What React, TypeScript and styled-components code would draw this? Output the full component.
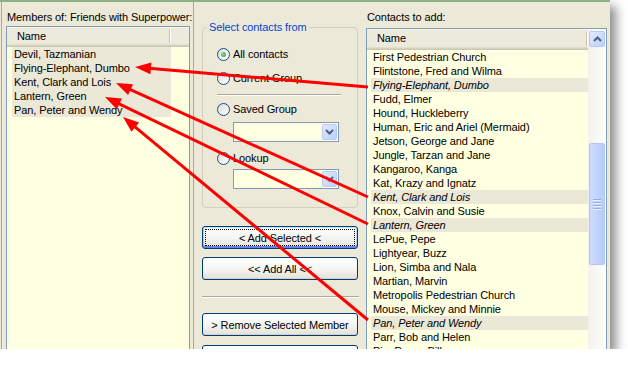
import styled, { createGlobalStyle } from "styled-components";

const GlobalStyle = createGlobalStyle`
  html, body {
    margin: 0;
    padding: 0;
    background: #fff;
  }
  body {
    font-family: "Liberation Sans", Arial, sans-serif;
    font-size: 11px;
    letter-spacing: -0.1px;
    color: #000;
  }
  * {
    box-sizing: border-box;
  }
`;

const Window = styled.div`
  position: relative;
  display: flex;
  width: 610px;
  height: 349px;
  padding-left: 1px;
  background: #ece9d8;
  border-top: 2px solid #8fae8a;
  box-shadow: 6px 6px 10px rgba(0, 0, 0, 0.45);
  overflow: hidden;
`;

const LeftPanel = styled.div`
  width: 193px;
  display: flex;
  flex-direction: column;
  padding-left: 4px;
  border-left: 1px solid #aca899;
  border-right: 1px solid #aca899;
`;

const MiddlePanel = styled.div`
  width: 171px;
  display: flex;
  flex-direction: column;
  padding-left: 8px;
`;

const RightPanel = styled.div`
  flex: 1;
  display: flex;
  flex-direction: column;
  min-height: 0;
  padding: 0 3px 0 1px;
`;

const PanelLabel = styled.div<{ $h: number; $pb: number }>`
  height: ${(p) => p.$h}px;
  flex-shrink: 0;
  display: flex;
  align-items: flex-end;
  padding: 0 0 ${(p) => p.$pb}px 1px;
  line-height: 13px;
  white-space: nowrap;
`;

const ListBox = styled.div<{ $w?: number }>`
  flex: 1;
  min-height: 0;
  display: flex;
  overflow: hidden;
  width: ${(p) => (p.$w ? `${p.$w}px` : "auto")};
  padding-top: 1px;
  background: #ffffe1;
  border: 1px solid #7f9db9;
  border-bottom: none;
`;

const ListColumn = styled.div`
  flex: 1;
  display: flex;
  flex-direction: column;
`;

const ListHeader = styled.div<{ $h: number }>`
  height: ${(p) => p.$h}px;
  flex-shrink: 0;
  display: flex;
  align-items: center;
  padding-bottom: 3px;
  background: #ebeadb;
  box-shadow: inset 0 -1px #cbc7b8, inset 0 -2px #d6d2c2, inset 0 -3px #e2decd;
`;

const HeaderCell = styled.div<{ $w: number }>`
  width: ${(p) => p.$w}px;
  padding-left: 10px;
  line-height: 13px;
`;

const HeaderDivider = styled.span`
  width: 2px;
  height: 14px;
  border-left: 1px solid #c7c5b2;
  border-right: 1px solid #fff;
`;

const Rows = styled.div<{ $pad: number; $w?: number }>`
  display: flex;
  flex-direction: column;
  padding-left: ${(p) => p.$pad}px;
  width: ${(p) => (p.$w ? `${p.$w}px` : "100%")};
`;

const Row = styled.div<{ $sel?: boolean; $italic?: boolean }>`
  height: 14px;
  flex-shrink: 0;
  line-height: 14px;
  padding-left: 2px;
  white-space: nowrap;
  background: ${(p) => (p.$sel ? "#ebe8d7" : "transparent")};
  font-style: ${(p) => (p.$italic ? "italic" : "normal")};
`;

const ScrollBar = styled.div`
  width: 18px;
  display: flex;
  flex-direction: column;
  padding: 1px 1px 0 1px;
  background: linear-gradient(90deg, #f3f1ec, #fefefb);
`;

const ScrollButton = styled.div`
  width: 16px;
  height: 16px;
  flex-shrink: 0;
  display: flex;
  align-items: center;
  justify-content: center;
  border: 1px solid #b7caf5;
  border-radius: 2px;
  background: linear-gradient(135deg, #e1eafe, #bcd0fb);
`;

const Thumb = styled.div`
  margin-top: 96px;
  width: 16px;
  height: 122px;
  flex-shrink: 0;
  display: flex;
  flex-direction: column;
  align-items: center;
  justify-content: center;
  gap: 1px;
  border: 1px solid #b1c6f5;
  border-radius: 2px;
  background: linear-gradient(90deg, #cddbfd, #b8ccf9);
`;

const GripLine = styled.span`
  width: 8px;
  height: 1px;
  background: #8cabf0;
  box-shadow: 0 1px #eef3fe;
  margin-bottom: 1px;
`;

const GroupBox = styled.fieldset`
  margin: 19px 0 0 0;
  width: 156px;
  padding: 12px 0 18px 4px;
  border: 1px solid #d0d0bf;
  border-radius: 4px;
  min-width: 0;
`;

const GroupLegend = styled.legend`
  padding: 0 2px;
  color: #0046d5;
  line-height: 13px;
`;

const GroupBody = styled.div`
  display: flex;
  flex-direction: column;
  padding-left: 10px;
`;

const RadioRow = styled.label<{ $mt: number }>`
  height: 16px;
  margin-top: ${(p) => p.$mt}px;
  display: flex;
  align-items: center;
  gap: 3px;
  white-space: nowrap;
`;

const Radio = styled.span<{ $checked?: boolean }>`
  width: 13px;
  height: 13px;
  border-radius: 50%;
  border: 1px solid #1c5180;
  display: flex;
  align-items: center;
  justify-content: center;
  background: linear-gradient(135deg, #dcdcd7, #fff);
  &::after {
    content: "";
    width: 5px;
    height: 5px;
    border-radius: 50%;
    background: ${(p) =>
      p.$checked ? "radial-gradient(circle at 35% 35%, #8fd48f, #3a9a3a)" : "transparent"};
  }
`;

const RuleLine = styled.div`
  margin-top: 8px;
  width: 124px;
  height: 2px;
  border-top: 1px solid #aca899;
  border-bottom: 1px solid #fff;
`;

const Combo = styled.div<{ $mt: number }>`
  margin: ${(p) => p.$mt}px 0 0 16px;
  width: 106px;
  height: 20px;
  display: flex;
  justify-content: flex-end;
  padding: 1px;
  border: 1px solid #7f9db9;
  background: #ffffe1;
`;

const ComboButton = styled.div`
  width: 15px;
  display: flex;
  align-items: center;
  justify-content: center;
  border: 1px solid #b7caf5;
  border-radius: 2px;
  background: linear-gradient(135deg, #e1eafe, #bcd0fb);
`;

const Button = styled.button<{ $mt: number; $focus?: boolean }>`
  margin-top: ${(p) => p.$mt}px;
  width: 156px;
  height: 23px;
  flex-shrink: 0;
  padding: 0;
  font-family: "Liberation Sans", Arial, sans-serif;
  font-size: 11px;
  letter-spacing: -0.1px;
  color: #000;
  border: 1px solid #003c74;
  border-radius: 3px;
  background: linear-gradient(180deg, #ffffff 0%, #f4f4f0 55%, #e3e1d7 100%);
  box-shadow: ${(p) =>
    p.$focus
      ? "inset 0 1px #cee7ff, inset 0 -2px #6982ee, inset 1px 0 #b7cdf7, inset -1px 0 #b7cdf7"
      : "inset 0 -1px #d6d0c5"};
  outline: ${(p) => (p.$focus ? "1px dotted #000" : "none")};
  outline-offset: -4px;
`;

const Etched = styled.div<{ $mt: number }>`
  margin-top: ${(p) => p.$mt}px;
  width: 157px;
  height: 2px;
  flex-shrink: 0;
  border-top: 1px solid #aca899;
  border-bottom: 1px solid #fff;
`;

const Overlay = styled.svg`
  position: absolute;
  top: -2px;
  left: 0;
  pointer-events: none;
`;

const members = [
  "Devil, Tazmanian",
  "Flying-Elephant, Dumbo",
  "Kent, Clark and Lois",
  "Lantern, Green",
  "Pan, Peter and Wendy",
];

const contacts: { name: string; picked?: boolean }[] = [
  { name: "First Pedestrian Church" },
  { name: "Flintstone, Fred and Wilma" },
  { name: "Flying-Elephant, Dumbo", picked: true },
  { name: "Fudd, Elmer" },
  { name: "Hound, Huckleberry" },
  { name: "Human, Eric and Ariel (Mermaid)" },
  { name: "Jetson, George and Jane" },
  { name: "Jungle, Tarzan and Jane" },
  { name: "Kangaroo, Kanga" },
  { name: "Kat, Krazy and Ignatz" },
  { name: "Kent, Clark and Lois", picked: true },
  { name: "Knox, Calvin and Susie" },
  { name: "Lantern, Green", picked: true },
  { name: "LePue, Pepe" },
  { name: "Lightyear, Buzz" },
  { name: "Lion, Simba and Nala" },
  { name: "Martian, Marvin" },
  { name: "Metropolis Pedestrian Church" },
  { name: "Mouse, Mickey and Minnie" },
  { name: "Pan, Peter and Wendy", picked: true },
  { name: "Parr, Bob and Helen" },
  { name: "Pie, Pecos Bill" },
];

// arrows go from the contact on the right to the new member on the left
const arrows = [
  { from: [368, 87], to: [135, 67] },
  { from: [368, 197], to: [116, 83] },
  { from: [368, 224], to: [105, 97] },
  { from: [368, 320], to: [123, 117] },
];

function arrowParts(from: number[], to: number[]) {
  const dx = from[0] - to[0];
  const dy = from[1] - to[1];
  const len = Math.hypot(dx, dy);
  const ux = dx / len;
  const uy = dy / len;
  const L = 16;
  const W = 6;
  const bx = to[0] + ux * L;
  const by = to[1] + uy * L;
  const head = `${to[0]},${to[1]} ${bx - uy * W},${by + ux * W} ${bx + uy * W},${by - ux * W}`;
  return { bx: to[0] + ux * (L - 2), by: to[1] + uy * (L - 2), head };
}

function App() {
  return (
    <>
      <GlobalStyle />
      <Window>
        <LeftPanel>
          <PanelLabel $h={24} $pb={2}>
            Members of: Friends with Superpower:
          </PanelLabel>
          <ListBox $w={184}>
            <ListColumn>
              <ListHeader $h={19}>
                <HeaderCell $w={162}>Name</HeaderCell>
                <HeaderDivider />
              </ListHeader>
              <Rows $pad={5} $w={164}>
                {members.map((m) => (
                  <Row key={m} $sel>
                    {m}
                  </Row>
                ))}
              </Rows>
            </ListColumn>
          </ListBox>
        </LeftPanel>

        <MiddlePanel>
          <GroupBox>
            <GroupLegend>Select contacts from</GroupLegend>
            <GroupBody>
              <RadioRow $mt={0}>
                <Radio $checked />
                All contacts
              </RadioRow>
              <RadioRow $mt={8}>
                <Radio />
                Current Group
              </RadioRow>
              <RuleLine />
              <RadioRow $mt={5}>
                <Radio />
                Saved Group
              </RadioRow>
              <Combo $mt={5}>
                <ComboButton>
                  <svg width="9" height="6" viewBox="0 0 9 6">
                    <path d="M1 1l3.5 3.5L8 1" fill="none" stroke="#4d6185" strokeWidth="2" />
                  </svg>
                </ComboButton>
              </Combo>
              <RadioRow $mt={8}>
                <Radio />
                Lookup
              </RadioRow>
              <Combo $mt={3}>
                <ComboButton>
                  <svg width="9" height="6" viewBox="0 0 9 6">
                    <path d="M1 1l3.5 3.5L8 1" fill="none" stroke="#4d6185" strokeWidth="2" />
                  </svg>
                </ComboButton>
              </Combo>
            </GroupBody>
          </GroupBox>
          <Button $mt={18} $focus>
            &lt; Add Selected &lt;
          </Button>
          <Button $mt={8}>&lt;&lt; Add All &lt;&lt;</Button>
          <Etched $mt={16} />
          <Button $mt={15}>&gt; Remove Selected Member</Button>
          <Button $mt={9} aria-label="Remove all members" />
        </MiddlePanel>

        <RightPanel>
          <PanelLabel $h={26} $pb={4}>
            Contacts to add:
          </PanelLabel>
          <ListBox>
            <ListColumn>
              <ListHeader $h={20}>
                <HeaderCell $w={219}>Name</HeaderCell>
                <HeaderDivider />
              </ListHeader>
              <Rows $pad={4}>
                {contacts.map((c) => (
                  <Row key={c.name} $sel={c.picked} $italic={c.picked}>
                    {c.name}
                  </Row>
                ))}
              </Rows>
            </ListColumn>
            <ScrollBar>
              <ScrollButton>
                <svg width="9" height="6" viewBox="0 0 9 6">
                  <path d="M1 5l3.5-3.5L8 5" fill="none" stroke="#4d6185" strokeWidth="2" />
                </svg>
              </ScrollButton>
              <Thumb>
                <GripLine />
                <GripLine />
                <GripLine />
                <GripLine />
              </Thumb>
            </ScrollBar>
          </ListBox>
        </RightPanel>

        <Overlay width="610" height="351" viewBox="0 0 610 351">
          {arrows.map((a, i) => {
            const { bx, by, head } = arrowParts(a.from, a.to);
            return (
              <g key={i}>
                <line x1={a.from[0]} y1={a.from[1]} x2={bx} y2={by} stroke="#ff0000" strokeWidth="3" />
                <polygon points={head} fill="#ff0000" />
              </g>
            );
          })}
        </Overlay>
      </Window>
    </>
  );
}

export default App;
